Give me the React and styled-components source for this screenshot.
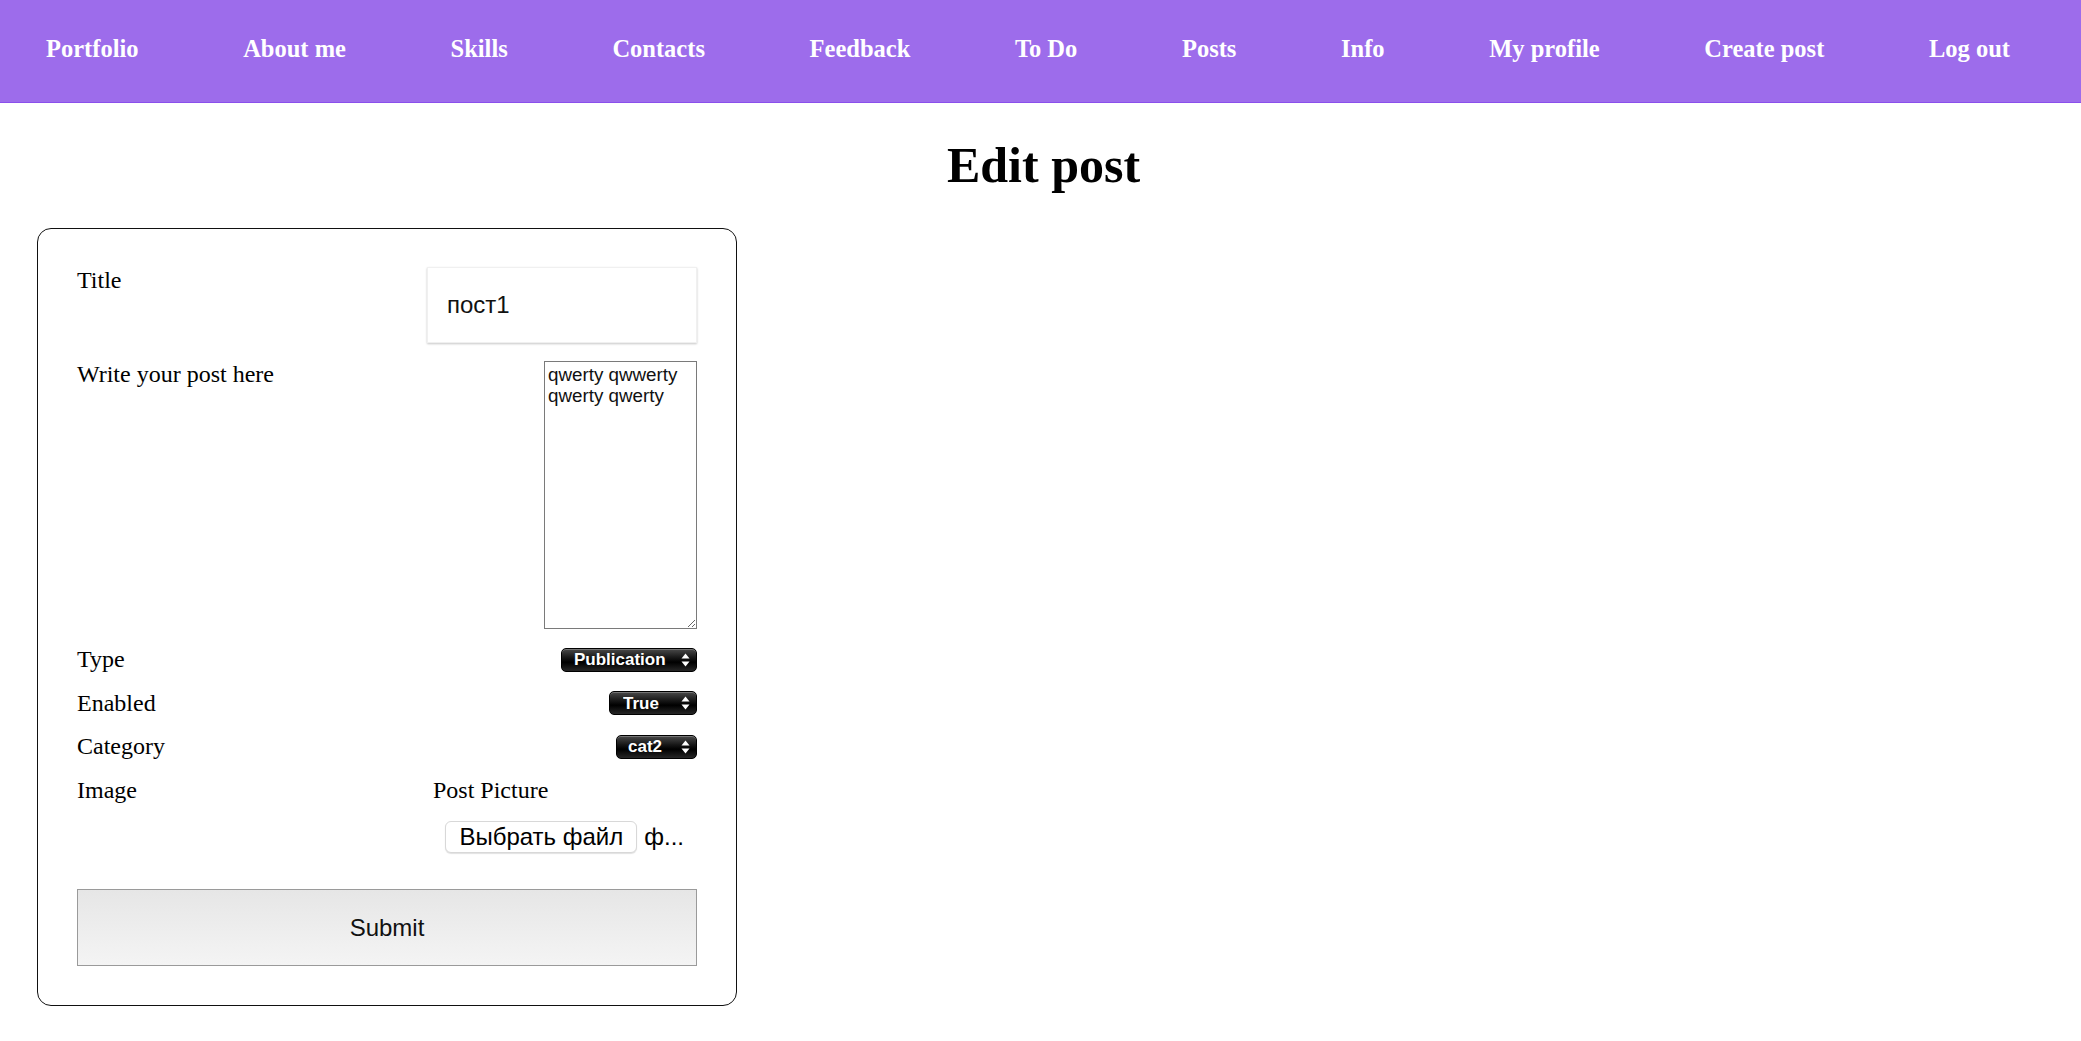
import React from "react";
import styled, { createGlobalStyle } from "styled-components";

const GlobalStyle = createGlobalStyle`
  body {
    margin: 0;
    background: #fff;
    font-family: "Liberation Serif", "Times New Roman", serif;
    color: #000;
  }
`;

const Header = styled.header`
  background: #9d6ceb;
  border-bottom: 1px solid #8a4fec;
  height: 103px;
  padding-bottom: 5px;
  box-sizing: border-box;
  display: flex;
  align-items: center;
`;

const NavList = styled.ul`
  list-style: none;
  display: flex;
  justify-content: space-between;
  width: 100%;
  margin: 0;
  padding: 0 71px 0 46px;
  box-sizing: border-box;
`;

const NavLink = styled.a`
  font-family: "Liberation Serif", "Times New Roman", serif;
  font-weight: bold;
  font-size: 24.5px;
  color: #fff;
  text-decoration: none;
  cursor: pointer;
`;

const PageTitle = styled.h1`
  font-family: "Liberation Serif", "Times New Roman", serif;
  font-size: 50px;
  font-weight: bold;
  text-align: center;
  margin: 34px 0 34px 6px;
  line-height: 57px;
`;

const Card = styled.form`
  margin-left: 37px;
  width: 700px;
  box-sizing: border-box;
  border: 1px solid #111;
  border-radius: 14px;
  padding: 38px 39px 39px;
  display: flex;
  flex-direction: column;
`;

const Row = styled.div`
  display: flex;
  justify-content: space-between;
  align-items: ${(p) => (p.$top ? "flex-start" : "center")};
  margin-top: ${(p) => p.$gap || 0}px;
`;

const Label = styled.label`
  font-family: "Liberation Serif", "Times New Roman", serif;
  font-size: 24px;
  line-height: 27.6px;
`;

const TextInput = styled.input`
  width: 270px;
  height: 76px;
  box-sizing: border-box;
  border: 1px solid #f0f0f0;
  box-shadow: 0 1px 2px rgba(0, 0, 0, 0.22);
  padding: 0 19px;
  font-family: "Liberation Sans", Arial, sans-serif;
  font-size: 24px;
  color: #111;
  outline: none;
`;

const TextArea = styled.textarea`
  width: 153px;
  height: 268px;
  box-sizing: border-box;
  border: 1px solid #7a7a7a;
  padding: 3px;
  margin: 0;
  font-family: "Liberation Sans", Arial, sans-serif;
  font-size: 18.8px;
  line-height: 20.5px;
  color: #111;
  display: block;
`;

const SelectWrap = styled.div`
  position: relative;
  width: ${(p) => p.$width}px;
  height: 24px;
`;

const Select = styled.select`
  appearance: none;
  width: 100%;
  height: 100%;
  border: 1px solid #000;
  border-radius: 5px;
  background: linear-gradient(#4a4a4a 0%, #161616 40%, #000 60%, #262626 100%);
  box-shadow: inset 0 1px 0 rgba(255, 255, 255, 0.25);
  color: #fff;
  font-family: "Liberation Sans", Arial, sans-serif;
  font-size: 17px;
  font-weight: bold;
  padding: 0 0 0 ${(p) => p.$pad}px;
  margin: 0;
  outline: none;
`;

const Arrows = styled.svg`
  position: absolute;
  right: 7px;
  top: 5px;
  pointer-events: none;
`;

const PictureBox = styled.div`
  width: 270px;
  display: flex;
  flex-direction: column;
`;

const PictureLabel = styled(Label)`
  padding-left: 6px;
`;

const FileLine = styled.div`
  display: flex;
  align-items: center;
  justify-content: flex-end;
  margin-top: 17px;
  padding-right: 13px;
  font-family: "Liberation Sans", Arial, sans-serif;
  font-size: 24px;
`;

const FileButton = styled.button`
  height: 32px;
  padding: 0 13px;
  border: 1px solid #d8d8d8;
  border-radius: 6px;
  background: #fff;
  box-shadow: 0 1px 1px rgba(0, 0, 0, 0.12);
  font-family: "Liberation Sans", Arial, sans-serif;
  font-size: 24px;
  color: #000;
  margin-right: 7px;
`;

const Submit = styled.button`
  margin-top: 36px;
  width: 100%;
  height: 77px;
  border: 1px solid #9a9a9a;
  background: linear-gradient(#e6e6e6, #f4f4f4);
  font-family: "Liberation Sans", Arial, sans-serif;
  font-size: 24px;
  color: #111;
`;

const navItems = [
  "Portfolio",
  "About me",
  "Skills",
  "Contacts",
  "Feedback",
  "To Do",
  "Posts",
  "Info",
  "My profile",
  "Create post",
  "Log out",
];

const Dropdown = ({ width, pad, value, options }) => (
  <SelectWrap $width={width}>
    <Select $pad={pad} defaultValue={value}>
      {options.map((o) => (
        <option key={o}>{o}</option>
      ))}
    </Select>
    <Arrows width="9" height="14" viewBox="0 0 9 14">
      <path d="M4.5 0.5 L8.5 5.5 L0.5 5.5 Z" fill="#fff" />
      <path d="M4.5 13.5 L8.5 8.5 L0.5 8.5 Z" fill="#fff" />
    </Arrows>
  </SelectWrap>
);

const App = () => {
  return (
    <>
      <GlobalStyle />
      <Header>
        <nav style={{ width: "100%" }}>
          <NavList>
            {navItems.map((item) => (
              <li key={item}>
                <NavLink>{item}</NavLink>
              </li>
            ))}
          </NavList>
        </nav>
      </Header>

      <PageTitle>Edit post</PageTitle>

      <Card onSubmit={(e) => e.preventDefault()}>
        <Row $top>
          <Label>Title</Label>
          <TextInput defaultValue="пост1" />
        </Row>

        <Row $top $gap={18}>
          <Label>Write your post here</Label>
          <TextArea defaultValue="qwerty qwwerty qwerty qwerty" />
        </Row>

        <Row $gap={17}>
          <Label>Type</Label>
          <Dropdown width={136} pad={12} value="Publication" options={["Publication", "Draft"]} />
        </Row>

        <Row $gap={16}>
          <Label>Enabled</Label>
          <Dropdown width={88} pad={13} value="True" options={["True", "False"]} />
        </Row>

        <Row $gap={16}>
          <Label>Category</Label>
          <Dropdown width={81} pad={11} value="cat2" options={["cat1", "cat2", "cat3"]} />
        </Row>

        <Row $top $gap={16}>
          <Label>Image</Label>
          <PictureBox>
            <PictureLabel>Post Picture</PictureLabel>
            <FileLine>
              <FileButton type="button">Выбрать файл</FileButton>
              <span>ф...</span>
            </FileLine>
          </PictureBox>
        </Row>

        <Submit type="submit">Submit</Submit>
      </Card>
    </>
  );
};

export default App;
